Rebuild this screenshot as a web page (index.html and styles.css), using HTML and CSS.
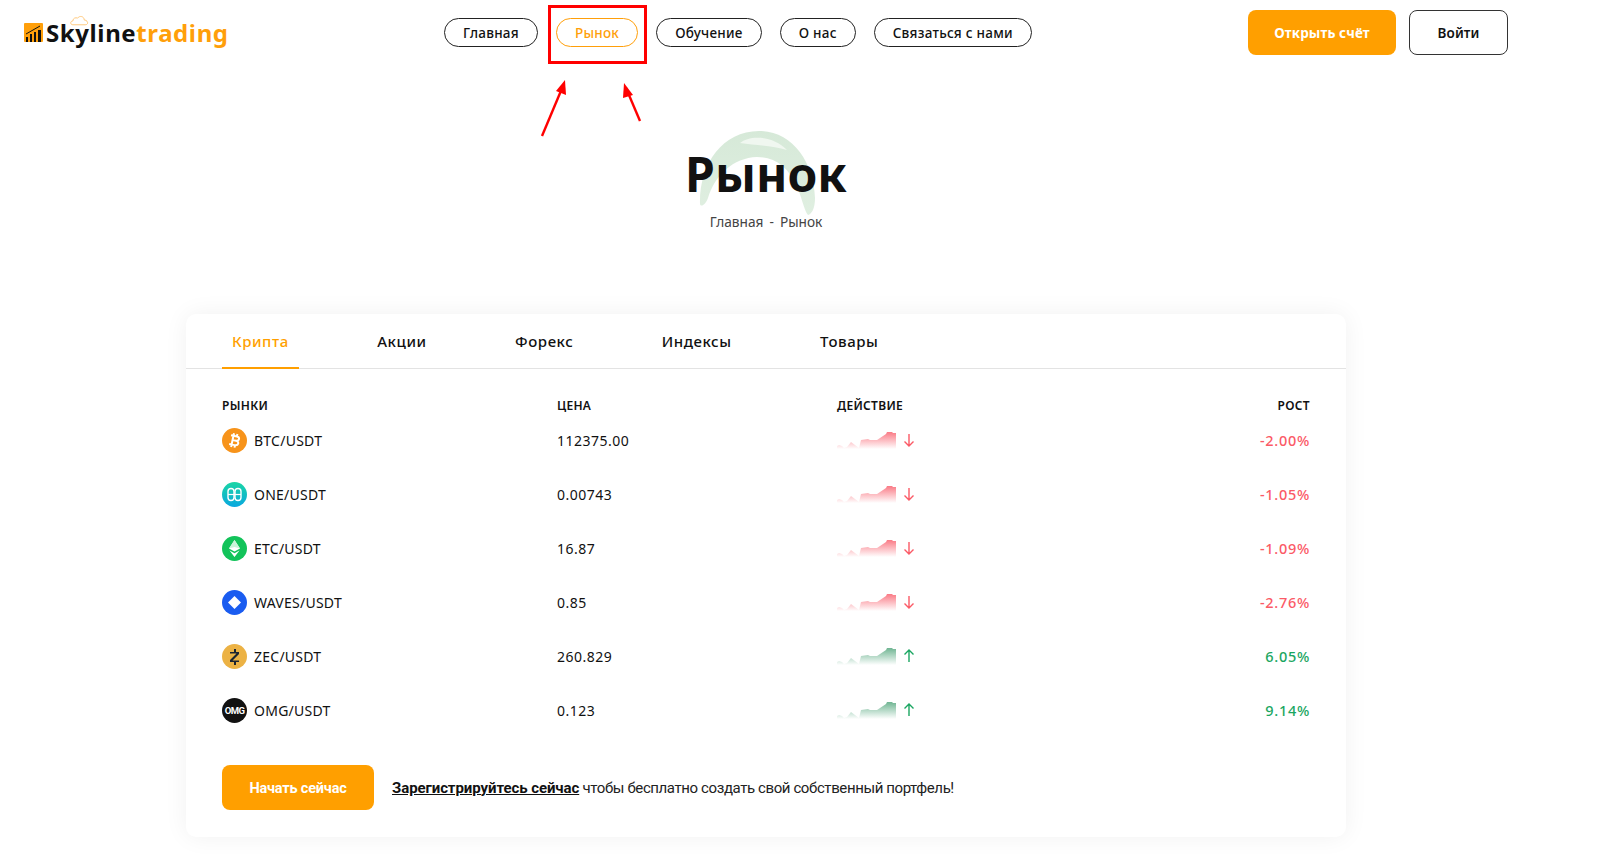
FILE: index.html
```html
<!DOCTYPE html>
<html lang="ru">
<head>
    <meta charset="UTF-8">
    <meta name="viewport" content="width=device-width, initial-scale=1.0">
    <title>Рынок</title>
    <link rel="stylesheet" href="styles.css">
</head>
<body>
    <svg class="defs" width="0" height="0" aria-hidden="true">
        <defs>
            <linearGradient id="fade-red" x1="0" y1="0" x2="0" y2="1">
                <stop offset="0" stop-color="#fa7a85"/>
                <stop offset="1" stop-color="#ffffff"/>
            </linearGradient>
            <linearGradient id="fade-green" x1="0" y1="0" x2="0" y2="1">
                <stop offset="0" stop-color="#6fb592"/>
                <stop offset="1" stop-color="#ffffff"/>
            </linearGradient>
            <linearGradient id="fade-blob" x1="0" y1="0" x2="0" y2="1">
                <stop offset="0" stop-color="#d6e9d8"/>
                <stop offset="1" stop-color="#e0efe1"/>
            </linearGradient>
            <linearGradient id="fade-one" x1="0" y1="0" x2="0" y2="1">
                <stop offset="0" stop-color="#19d6a4"/>
                <stop offset="1" stop-color="#0aa7e0"/>
            </linearGradient>
            <symbol id="spark" viewBox="0 0 60 18">
                <path d="M0 15 L2 14 L5 15 L7 17 L10 16 L14 11 L18 14 L22 17 L24 9 L31 8 L33 9 L40 9 L49 3 L50 1 L55 1 L56 2 L59 2 L59 18 L0 18 Z"/>
            </symbol>
            <symbol id="arrow" viewBox="0 0 12 14">
                <path d="M6 1 V13 M1.5 8.5 L6 13 L10.5 8.5" fill="none" stroke="currentColor" stroke-width="1.4"/>
            </symbol>
        </defs>
    </svg>

    <header class="topbar">
        <a class="logo" href="#">
            <svg class="logo-mark" viewBox="0 0 20 20">
                <rect width="19" height="19" y="1" rx="1" fill="#ff9f0a"/>
                <rect x="2" y="15" width="2" height="5" fill="#111"/>
                <rect x="6" y="12" width="2" height="8" fill="#111"/>
                <rect x="10" y="10" width="2" height="10" fill="#111"/>
                <rect x="14" y="8" width="3" height="12" fill="#111"/>
                <path d="M2 12 L9 8 L16 4" fill="none" stroke="#111" stroke-width="1"/>
            </svg>
            <svg class="logo-cloud" viewBox="0 0 20 11">
                <path d="M3 10 C0 10 0 6 3 6 C3 3 6 2 8 3 C10 0 15 1 15 5 C19 5 20 10 16 10 Z" fill="none" stroke="#ffc677" stroke-width="1"/>
            </svg>
            <span class="logo-dark">Skyline</span><span class="logo-accent">trading</span>
        </a>
        <nav class="nav">
            <a class="pill" href="#">Главная</a>
            <a class="pill pill-active" href="#">Рынок</a>
            <a class="pill" href="#">Обучение</a>
            <a class="pill" href="#">О нас</a>
            <a class="pill" href="#">Связаться с нами</a>
        </nav>
        <div class="auth">
            <a class="btn btn-primary" href="#">Открыть счёт</a>
            <a class="btn btn-outline" href="#">Войти</a>
        </div>
    </header>

    <!-- red annotation drawn over the screenshot -->
    <div class="mark-box"></div>
    <svg class="mark-arrows" viewBox="0 0 110 60">
        <path d="M3 57 L24 7" stroke="#ff0000" stroke-width="2.4" fill="none"/>
        <path d="M26 1 L27 16 L17 12 Z" fill="#ff0000"/>
        <path d="M101 42 L87 9" stroke="#ff0000" stroke-width="2.4" fill="none"/>
        <path d="M85 4 L94 16 L84 19 Z" fill="#ff0000"/>
    </svg>

    <section class="hero">
        <svg class="hero-blob" viewBox="0 0 120 86">
            <path d="M3 74 C2 35 25 1 62 1 C95 1 117 32 118 68 C118 78 115 84 111 85 C108 82 106 72 100 56 C91 37 78 27 60 27 C36 28 18 45 11 68 C9 74 4 78 3 74 Z" fill="url(#fade-blob)"/>
            <path d="M43 13 C52 5 76 5 90 20 C76 16 58 15 43 13 Z" fill="#f0f7f0"/>
        </svg>
        <h1 class="hero-title">Рынок</h1>
        <p class="crumbs"><span>Главная</span><span class="crumbs-sep">-</span><span>Рынок</span></p>
    </section>

    <main class="card">
        <div class="tabs">
            <a class="tab tab-active" href="#">Крипта</a>
            <a class="tab" href="#">Акции</a>
            <a class="tab" href="#">Форекс</a>
            <a class="tab" href="#">Индексы</a>
            <a class="tab" href="#">Товары</a>
        </div>

        <div class="market">
            <div class="row row-head">
                <div>РЫНКИ</div>
                <div>ЦЕНА</div>
                <div>ДЕЙСТВИЕ</div>
                <div class="cell-right">РОСТ</div>
            </div>

            <div class="row">
                <div class="pair">
                    <svg class="coin" viewBox="0 0 25 25">
                        <circle cx="12.5" cy="12.5" r="12.5" fill="#f7931a"/>
                        <path transform="rotate(12 12.5 12.5)" d="M10.5 5.5 V19.5 M14 5.5 V8 M14 17 V19.5 M8 8 H14 C17.5 8 17.5 12.2 14 12.4 C18 12.6 17.5 17 13.5 17 H8 M10 12.4 H14" fill="none" stroke="#fff" stroke-width="2"/>
                    </svg>
                    BTC/USDT
                </div>
                <div>112375.00</div>
                <div class="action down">
                    <svg class="spark spark-red"><use href="#spark"/></svg>
                    <svg class="trend"><use href="#arrow"/></svg>
                </div>
                <div class="cell-right change down">-2.00%</div>
            </div>

            <div class="row">
                <div class="pair">
                    <svg class="coin" viewBox="0 0 25 25">
                        <circle cx="12.5" cy="12.5" r="12.5" fill="url(#fade-one)"/>
                        <rect x="6" y="6.5" width="6" height="12" rx="3" fill="none" stroke="#fff" stroke-width="1.4"/>
                        <rect x="13" y="6.5" width="6" height="12" rx="3" fill="none" stroke="#fff" stroke-width="1.4"/>
                        <path d="M6 12.5 H19" stroke="#fff" stroke-width="1.2"/>
                    </svg>
                    ONE/USDT
                </div>
                <div>0.00743</div>
                <div class="action down">
                    <svg class="spark spark-red"><use href="#spark"/></svg>
                    <svg class="trend"><use href="#arrow"/></svg>
                </div>
                <div class="cell-right change down">-1.05%</div>
            </div>

            <div class="row">
                <div class="pair">
                    <svg class="coin" viewBox="0 0 25 25">
                        <circle cx="12.5" cy="12.5" r="12.5" fill="#12c35a"/>
                        <path d="M12.5 4 L18 12.5 L12.5 15.5 L7 12.5 Z" fill="#fff"/>
                        <path d="M12.5 4 L18 12.5 L12.5 11 L7 12.5 Z" fill="#c8f3d8"/>
                        <path d="M7.5 14.5 L12.5 17.3 L17.5 14.5 L12.5 21 Z" fill="#fff"/>
                    </svg>
                    ETC/USDT
                </div>
                <div>16.87</div>
                <div class="action down">
                    <svg class="spark spark-red"><use href="#spark"/></svg>
                    <svg class="trend"><use href="#arrow"/></svg>
                </div>
                <div class="cell-right change down">-1.09%</div>
            </div>

            <div class="row">
                <div class="pair">
                    <svg class="coin" viewBox="0 0 25 25">
                        <circle cx="12.5" cy="12.5" r="12.5" fill="#1a5cf0"/>
                        <path d="M12.5 6 L19 12.5 L12.5 19 L6 12.5 Z" fill="#fff"/>
                    </svg>
                    WAVES/USDT
                </div>
                <div>0.85</div>
                <div class="action down">
                    <svg class="spark spark-red"><use href="#spark"/></svg>
                    <svg class="trend"><use href="#arrow"/></svg>
                </div>
                <div class="cell-right change down">-2.76%</div>
            </div>

            <div class="row">
                <div class="pair">
                    <svg class="coin" viewBox="0 0 25 25">
                        <circle cx="12.5" cy="12.5" r="12.5" fill="#ecb244"/>
                        <path d="M8 8 H17 V10 L10.5 16.5 H17 V18 H8 V16 L14.5 9.5 H8 Z M12 5 H14 V8 H12 Z M12 18 H14 V21 H12 Z" fill="#1c2430"/>
                    </svg>
                    ZEC/USDT
                </div>
                <div>260.829</div>
                <div class="action up">
                    <svg class="spark spark-green"><use href="#spark"/></svg>
                    <svg class="trend trend-up"><use href="#arrow"/></svg>
                </div>
                <div class="cell-right change up">6.05%</div>
            </div>

            <div class="row">
                <div class="pair">
                    <span class="coin coin-omg">OMG</span>
                    OMG/USDT
                </div>
                <div>0.123</div>
                <div class="action up">
                    <svg class="spark spark-green"><use href="#spark"/></svg>
                    <svg class="trend trend-up"><use href="#arrow"/></svg>
                </div>
                <div class="cell-right change up">9.14%</div>
            </div>
        </div>

        <div class="cta">
            <a class="btn btn-primary btn-start" href="#">Начать сейчас</a>
            <p class="cta-text"><a href="#">Зарегистрируйтесь сейчас</a> чтобы бесплатно создать свой собственный портфель!</p>
        </div>
    </main>
</body>
</html>
```

FILE: styles.css
```css
* {
    box-sizing: border-box;
}

html, body {
    height: 100%;
    overflow: hidden;
}

body {
    margin: 0;
    background: #fff;
    color: #111;
    font-family: "Noto Sans", "Open Sans", sans-serif;
    position: relative;
}

a {
    color: inherit;
    text-decoration: none;
}

.defs {
    position: absolute;
}

/* Top bar */
.topbar {
    display: flex;
    align-items: flex-start;
    height: 75px;
    padding: 10px 92px 0 24px;
}

.logo {
    position: relative;
    display: flex;
    align-items: center;
    width: 420px;
    height: 44px;
    font-size: 24px;
    font-weight: 700;
    letter-spacing: 0.6px;
}

.logo-mark {
    width: 20px;
    height: 20px;
    margin-right: 2px;
}

.logo-cloud {
    position: absolute;
    left: 46px;
    top: 5px;
    width: 19px;
    height: 11px;
}

.logo-accent {
    color: #ff9f0a;
}

.nav {
    display: flex;
    gap: 18px;
    padding-top: 8px;
}

.pill {
    display: flex;
    align-items: center;
    height: 29px;
    padding: 0 18px;
    border: 1px solid #222;
    border-radius: 15px;
    font-size: 13.5px;
    font-weight: 500;
    letter-spacing: 0.25px;
}

.pill-active {
    border-color: #ff9f0a;
    color: #ff9f0a;
}

.auth {
    display: flex;
    gap: 13px;
    margin-left: auto;
}

.btn {
    display: flex;
    align-items: center;
    justify-content: center;
    height: 45px;
    border-radius: 8px;
    font-size: 13.5px;
    font-weight: 700;
    letter-spacing: 0.1px;
}

.btn-primary {
    width: 148px;
    background: #ff9f00;
    color: #fff;
}

.btn-outline {
    width: 99px;
    border: 1px solid #333;
    font-weight: 600;
}

/* Red annotation */
.mark-box {
    position: absolute;
    left: 548px;
    top: 5px;
    width: 99px;
    height: 59px;
    border: 3px solid #ff0000;
}

.mark-arrows {
    position: absolute;
    left: 539px;
    top: 79px;
    width: 110px;
    height: 60px;
}

/* Page heading */
.hero {
    position: relative;
    width: 1532px;
    height: 239px;
    padding-top: 69px;
    text-align: center;
}

.hero-blob {
    position: absolute;
    left: 697px;
    top: 55px;
    width: 120px;
    height: 86px;
}

.hero-title {
    position: relative;
    margin: 0;
    font-size: 48px;
    line-height: 60px;
    font-weight: 700;
}

.crumbs {
    position: relative;
    display: flex;
    justify-content: center;
    gap: 6px;
    margin: 8px 0 0;
    color: #444;
    font-size: 13.7px;
    line-height: 20px;
}

/* Market card */
.card {
    width: 1160px;
    height: 523px;
    margin-left: 186px;
    background: #fff;
    border-radius: 10px;
    box-shadow: 0 0 25px rgba(0, 0, 0, 0.06);
}

.tabs {
    display: flex;
    gap: 68.5px;
    height: 55px;
    padding: 0 36px;
    border-bottom: 1px solid #e3e3e3;
}

.tab {
    display: flex;
    align-items: center;
    padding: 0 10px;
    margin-bottom: -1px;
    font-size: 15px;
    font-weight: 500;
    letter-spacing: 0.55px;
    border-bottom: 2px solid transparent;
}

.tab-active {
    color: #ff9f00;
    border-bottom-color: #ff9f00;
}

.market {
    padding: 27px 36px 0;
    font-size: 14px;
}

.row {
    display: grid;
    grid-template-columns: 335px 280px 1fr 200px;
    align-items: center;
    height: 54px;
    letter-spacing: 0.5px;
}

.row-head {
    height: 18px;
    margin-bottom: -1px;
    font-size: 12px;
    font-weight: 600;
    letter-spacing: 0.3px;
}

.cell-right {
    text-align: right;
}

.change {
    font-size: 14.5px;
    font-weight: 500;
    letter-spacing: 0.7px;
}

.pair {
    display: flex;
    align-items: center;
    gap: 7px;
    letter-spacing: 0.25px;
}

.coin {
    flex: none;
    width: 25px;
    height: 25px;
}

.coin-omg {
    display: flex;
    align-items: center;
    justify-content: center;
    border-radius: 50%;
    background: #111;
    color: #fff;
    font-family: Roboto, sans-serif;
    font-size: 9.5px;
    font-weight: 700;
    letter-spacing: -0.6px;
}

.action {
    display: flex;
    align-items: center;
    gap: 6px;
}

.spark {
    width: 60px;
    height: 18px;
}

.spark-red {
    fill: url(#fade-red);
}

.spark-green {
    fill: url(#fade-green);
}

.trend {
    width: 12px;
    height: 14px;
}

.trend-up {
    transform: rotate(180deg);
}

.down {
    color: #fb5a66;
}

.up {
    color: #1aa661;
}

.cta {
    display: flex;
    align-items: center;
    gap: 18px;
    padding: 28px 36px 0;
}

.btn-start {
    width: 152px;
    padding-top: 2px;
    font-family: Roboto, sans-serif;
    font-size: 14.5px;
    font-weight: 700;
    letter-spacing: -0.2px;
}

.cta-text {
    margin: 0;
    font-family: Roboto, sans-serif;
    font-size: 15px;
    letter-spacing: -0.4px;
    color: #222;
}

.cta-text a {
    color: #111;
    font-weight: 700;
    letter-spacing: -0.08px;
    text-decoration: underline;
}
```
